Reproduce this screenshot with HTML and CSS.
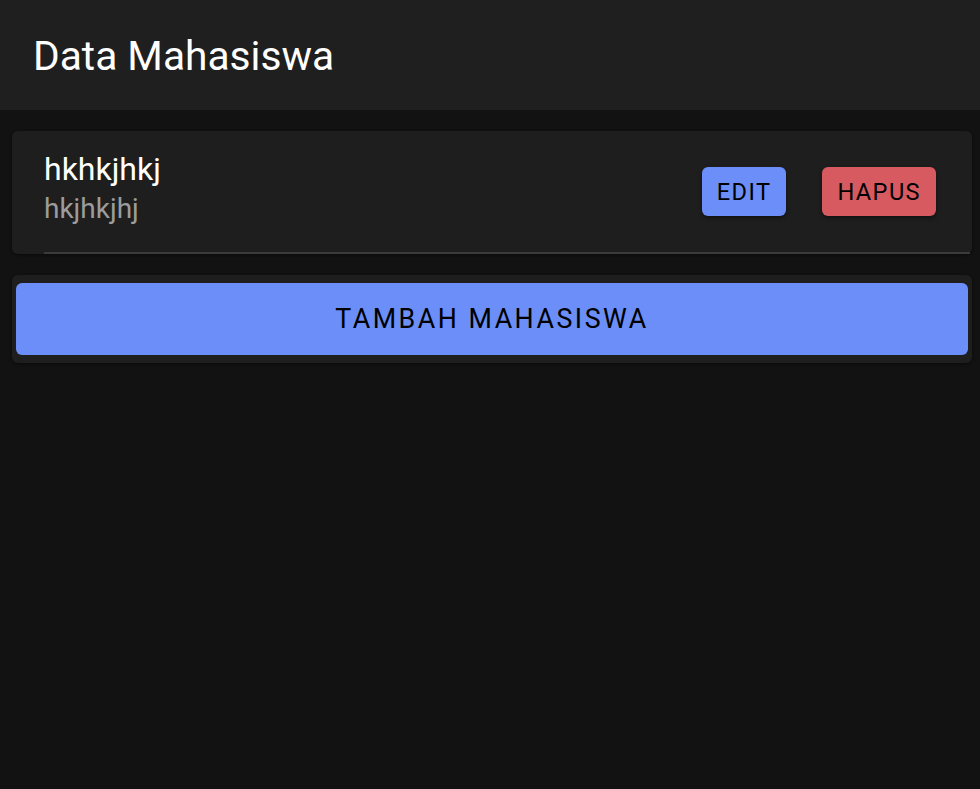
FILE: index.html
```html
<!DOCTYPE html>
<html>
<head>
<meta charset="utf-8">
<link rel="stylesheet" href="styles.css">
</head>
<body>
<header class="appbar"><h1 class="title">Data Mahasiswa</h1></header>
<main class="content">
  <section class="card">
    <div class="item">
      <div class="item-text">
        <div class="item-title">hkhkjhkj</div>
        <div class="item-sub">hkjhkjhj</div>
      </div>
      <div class="actions">
        <button class="btn btn-edit">EDIT</button>
        <button class="btn btn-delete">HAPUS</button>
      </div>
    </div>
  </section>
  <section class="card card-add">
    <button class="btn-add">TAMBAH MAHASISWA</button>
  </section>
</main>
</body>
</html>
```
FILE: styles.css
```css
* { box-sizing: border-box; }
html, body { height: 100%; }
body {
  margin: 0;
  background: #121212;
  font-family: Roboto, "Noto Sans", sans-serif;
  color: #fff;
}
.appbar {
  height: 110px;
  background: #1f1f1f;
  display: flex;
  align-items: center;
  padding-left: 33px;
  padding-top: 2px;
}
.title {
  margin: 0;
  font-size: 40.7px;
  font-weight: 400;
  color: #fff;
}
.content {
  padding: 21px 8px 0 12px;
  display: flex;
  flex-direction: column;
  gap: 21px;
}
.card {
  background: #1e1e1e;
  border-radius: 6px;
  box-shadow: 0 1px 3px rgba(0,0,0,0.5);
}
.item {
  height: 123px;
  display: flex;
  align-items: center;
  justify-content: space-between;
  padding: 0 36px 0 32px;
  position: relative;
}
.item::after {
  content: "";
  position: absolute;
  left: 32px;
  right: 2px;
  bottom: 0;
  height: 2px;
  background: #3a3a3a;
}
.item-text { display: flex; flex-direction: column; margin-top: -8px; }
.item-title { font-size: 32px; line-height: 38px; color: #fff; }
.item-sub { font-size: 28px; line-height: 38px; padding-top: 2px; color: #9c9c9c; }
.actions { display: flex; gap: 36px; margin-top: -2px; }
.btn {
  border: none;
  border-radius: 6px;
  height: 49px;
  padding: 0 15px;
  font-family: Roboto, sans-serif;
  font-size: 23.6px;
  letter-spacing: 1.4px;
  color: #000;
  box-shadow: 0 2px 4px rgba(0,0,0,0.45);
}
.btn-edit { background: #6b8ef8; }
.btn-delete { background: #d65a5f; }
.card-add { padding: 8px 4px; }
.btn-add {
  display: block;
  width: 100%;
  height: 72px;
  border: none;
  border-radius: 6px;
  background: #6b8ef8;
  color: #000;
  font-family: Roboto, sans-serif;
  font-size: 26.8px;
  letter-spacing: 2.5px;
}
```
